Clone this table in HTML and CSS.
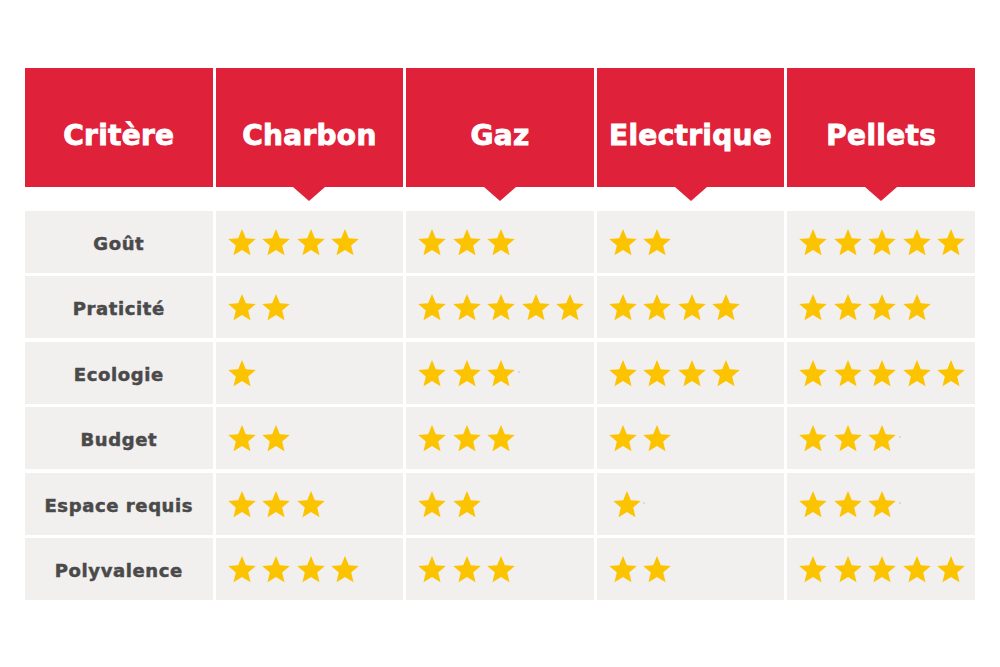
FILE: index.html
```html
<!DOCTYPE html>
<html lang="fr">
<head>
<meta charset="utf-8">
<title>Comparatif barbecues</title>
<link rel="stylesheet" href="styles.css">
</head>
<body>
<svg width="0" height="0" class="defs" aria-hidden="true">
  <defs>
    <symbol id="star" viewBox="0 0 24 24">
      <polygon points="12,1.6 15.05,8.95 23,9.6 16.95,14.75 18.8,22.5 12,18.35 5.2,22.5 7.05,14.75 1,9.6 8.95,8.95"/>
    </symbol>
  </defs>
</svg>
<main class="page">
  <div class="table">
    <div class="head">
      <div class="hcell">Critère</div>
      <div class="hcell arrow">Charbon</div>
      <div class="hcell arrow">Gaz</div>
      <div class="hcell arrow">Electrique</div>
      <div class="hcell arrow">Pellets</div>
    </div>
    <div class="body">
      <div class="cell label">Goût</div>
      <div class="cell stars"><svg><use href="#star"/></svg><svg><use href="#star"/></svg><svg><use href="#star"/></svg><svg><use href="#star"/></svg></div>
      <div class="cell stars"><svg><use href="#star"/></svg><svg><use href="#star"/></svg><svg><use href="#star"/></svg></div>
      <div class="cell stars"><svg><use href="#star"/></svg><svg><use href="#star"/></svg></div>
      <div class="cell stars"><svg><use href="#star"/></svg><svg><use href="#star"/></svg><svg><use href="#star"/></svg><svg><use href="#star"/></svg><svg><use href="#star"/></svg></div>

      <div class="cell label">Praticité</div>
      <div class="cell stars"><svg><use href="#star"/></svg><svg><use href="#star"/></svg></div>
      <div class="cell stars"><svg><use href="#star"/></svg><svg><use href="#star"/></svg><svg><use href="#star"/></svg><svg><use href="#star"/></svg><svg><use href="#star"/></svg></div>
      <div class="cell stars"><svg><use href="#star"/></svg><svg><use href="#star"/></svg><svg><use href="#star"/></svg><svg><use href="#star"/></svg></div>
      <div class="cell stars"><svg><use href="#star"/></svg><svg><use href="#star"/></svg><svg><use href="#star"/></svg><svg><use href="#star"/></svg></div>

      <div class="cell label">Ecologie</div>
      <div class="cell stars"><svg><use href="#star"/></svg></div>
      <div class="cell stars"><svg><use href="#star"/></svg><svg><use href="#star"/></svg><svg><use href="#star"/></svg><span class="dot"></span></div>
      <div class="cell stars"><svg><use href="#star"/></svg><svg><use href="#star"/></svg><svg><use href="#star"/></svg><svg><use href="#star"/></svg></div>
      <div class="cell stars"><svg><use href="#star"/></svg><svg><use href="#star"/></svg><svg><use href="#star"/></svg><svg><use href="#star"/></svg><svg><use href="#star"/></svg></div>

      <div class="cell label">Budget</div>
      <div class="cell stars"><svg><use href="#star"/></svg><svg><use href="#star"/></svg></div>
      <div class="cell stars"><svg><use href="#star"/></svg><svg><use href="#star"/></svg><svg><use href="#star"/></svg></div>
      <div class="cell stars"><svg><use href="#star"/></svg><svg><use href="#star"/></svg></div>
      <div class="cell stars"><svg><use href="#star"/></svg><svg><use href="#star"/></svg><svg><use href="#star"/></svg><span class="dot"></span></div>

      <div class="cell label">Espace requis</div>
      <div class="cell stars"><svg><use href="#star"/></svg><svg><use href="#star"/></svg><svg><use href="#star"/></svg></div>
      <div class="cell stars"><svg><use href="#star"/></svg><svg><use href="#star"/></svg></div>
      <div class="cell stars shifted"><svg><use href="#star"/></svg><span class="dot"></span></div>
      <div class="cell stars"><svg><use href="#star"/></svg><svg><use href="#star"/></svg><svg><use href="#star"/></svg><span class="dot"></span></div>

      <div class="cell label">Polyvalence</div>
      <div class="cell stars"><svg><use href="#star"/></svg><svg><use href="#star"/></svg><svg><use href="#star"/></svg><svg><use href="#star"/></svg></div>
      <div class="cell stars"><svg><use href="#star"/></svg><svg><use href="#star"/></svg><svg><use href="#star"/></svg></div>
      <div class="cell stars"><svg><use href="#star"/></svg><svg><use href="#star"/></svg></div>
      <div class="cell stars"><svg><use href="#star"/></svg><svg><use href="#star"/></svg><svg><use href="#star"/></svg><svg><use href="#star"/></svg><svg><use href="#star"/></svg></div>
    </div>
  </div>
</main>
</body>
</html>
```
FILE: styles.css
```css
* { box-sizing: border-box; }

html, body {
  margin: 0;
  padding: 0;
  background: #ffffff;
}

.defs {
  position: absolute;
  width: 0;
  height: 0;
  overflow: hidden;
}

.page {
  width: 1000px;
  height: 667px;
  padding: 68px 25px 0 25px;
  font-family: "DejaVu Sans", "Liberation Sans", sans-serif;
}

.table {
  display: flex;
  flex-direction: column;
  gap: 24px;
}

.head,
.body {
  display: grid;
  grid-template-columns: repeat(5, 1fr);
  column-gap: 3px;
}

.body {
  grid-auto-rows: 62px;
  row-gap: 3.4px;
}

.hcell {
  position: relative;
  height: 119px;
  background: #e0213a;
  color: #ffffff;
  font-weight: bold;
  font-size: 28px;
  letter-spacing: 0.3px;
  -webkit-text-stroke: 0.9px #ffffff;
  display: flex;
  align-items: center;
  justify-content: center;
  padding-top: 15px;
}

.hcell.arrow::after {
  content: "";
  position: absolute;
  left: 50%;
  top: 100%;
  margin-left: -16px;
  border-left: 16px solid transparent;
  border-right: 16px solid transparent;
  border-top: 14px solid #e0213a;
}

.cell {
  background: #f2efef;
  display: flex;
  align-items: center;
}

.label {
  justify-content: center;
  color: #4a4a4a;
  font-weight: bold;
  font-size: 18px;
  letter-spacing: 0.6px;
  -webkit-text-stroke: 0.5px #4a4a4a;
  padding-top: 3px;
}

.stars {
  padding-left: 11px;
  gap: 4.5px;
}

.stars.shifted {
  padding-left: 15px;
}

.stars svg {
  width: 30px;
  height: 30px;
  fill: #fcc300;
  flex: none;
}

.dot {
  width: 2px;
  height: 2px;
  border-radius: 50%;
  background: #d9d2c4;
  margin-left: -3px;
  margin-top: -2px;
}
```
